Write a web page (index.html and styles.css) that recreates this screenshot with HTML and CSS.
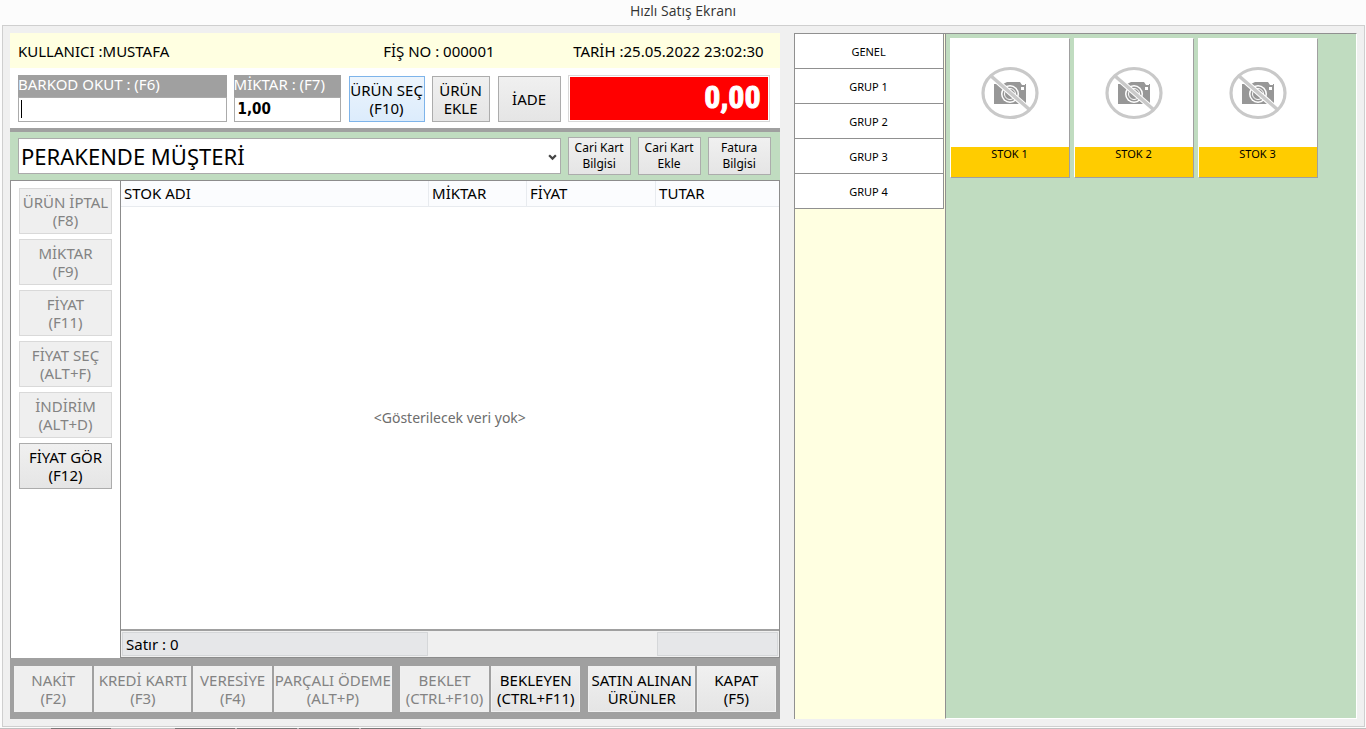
FILE: index.html
```html
<!DOCTYPE html>
<html lang="tr">
<head>
<meta charset="utf-8">
<title>Hızlı Satış Ekranı</title>
<link rel="stylesheet" href="styles.css">
</head>
<body>
<svg class="defs" aria-hidden="true">
  <symbol id="no-photo" viewBox="0 0 58 54">
    <path fill="#979797" d="M13 18h3v-1h4v1h2l4-2h13l2 3h4v-1h-1v1h1v19H13z"/>
    <path fill="#fff" d="M40 21h3v3h-3z"/>
    <circle cx="29" cy="28" r="9" fill="#fff"/>
    <circle cx="29" cy="28" r="7.500" fill="#979797"/>
    <circle cx="29" cy="28" r="5.500" fill="#979797" stroke="#fff" stroke-width="1"/>
    <path d="M10 10l39 34" stroke="#fff" stroke-width="5.500"/>
    <path d="M10 10l39 34" stroke="#c9c9c9" stroke-width="3.500"/>
    <ellipse cx="29" cy="27" rx="27" ry="24.500" fill="none" stroke="#c9c9c9" stroke-width="3.200"/>
  </symbol>
</svg>
<header class="titlebar">Hızlı Satış Ekranı</header>
<main class="window">
  <section class="sale">
    <div class="info">
      <span class="info-user">KULLANICI :MUSTAFA</span>
      <span class="info-slip">FİŞ NO : 000001</span>
      <span class="info-date">TARİH :25.05.2022 23:02:30</span>
    </div>
    <div class="entry">
      <div class="field field-barcode">
        <label for="barcode">BARKOD OKUT : (F6)</label>
        <input id="barcode" type="text">
        <span class="caret"></span>
      </div>
      <div class="field field-qty">
        <label for="qty">MİKTAR : (F7)</label>
        <input id="qty" type="text" value="1,00">
      </div>
      <button class="btn btn-active pick">ÜRÜN SEÇ<br>(F10)</button>
      <button class="btn add">ÜRÜN<br>EKLE</button>
      <button class="btn refund">İADE</button>
      <output class="total">0,00</output>
    </div>
    <div class="customer">
      <div class="combo">
        <select aria-label="Müşteri"><option>PERAKENDE MÜŞTERİ</option></select>
        <svg class="chevron" viewBox="0 0 8 6"><path d="M1 1l3 3 3-3" fill="none" stroke="#444" stroke-width="2"/></svg>
      </div>
      <button class="btn btn-small">Cari Kart<br>Bilgisi</button>
      <button class="btn btn-small">Cari Kart<br>Ekle</button>
      <button class="btn btn-small">Fatura<br>Bilgisi</button>
    </div>
    <div class="body">
      <nav class="side">
        <button class="btn" disabled>ÜRÜN İPTAL<br>(F8)</button>
        <button class="btn" disabled>MİKTAR<br>(F9)</button>
        <button class="btn" disabled>FİYAT<br>(F11)</button>
        <button class="btn" disabled>FİYAT SEÇ<br>(ALT+F)</button>
        <button class="btn" disabled>İNDİRİM<br>(ALT+D)</button>
        <button class="btn">FİYAT GÖR<br>(F12)</button>
      </nav>
      <div class="lines">
        <table>
          <colgroup><col><col class="col-qty"><col class="col-price"><col class="col-sum"></colgroup>
          <thead><tr><th>STOK ADI</th><th>MİKTAR</th><th>FİYAT</th><th>TUTAR</th></tr></thead>
        </table>
        <p class="empty">&lt;Gösterilecek veri yok&gt;</p>
        <div class="summary">
          <span class="cell cell-rows">Satır : 0</span>
          <span class="cell cell-sum"></span>
        </div>
      </div>
    </div>
    <footer class="actions">
      <button class="btn cash" disabled>NAKİT<br>(F2)</button>
      <button class="btn card-pay" disabled>KREDİ KARTI<br>(F3)</button>
      <button class="btn cash" disabled>VERESİYE<br>(F4)</button>
      <button class="btn split" disabled>PARÇALI ÖDEME<br>(ALT+P)</button>
      <button class="btn hold group-start" disabled>BEKLET<br>(CTRL+F10)</button>
      <button class="btn hold">BEKLEYEN<br>(CTRL+F11)</button>
      <button class="btn bought group-start">SATIN ALINAN<br>ÜRÜNLER</button>
      <button class="btn cash">KAPAT<br>(F5)</button>
    </footer>
  </section>
  <section class="catalog">
    <nav class="groups">
      <button>GENEL</button>
      <button>GRUP 1</button>
      <button>GRUP 2</button>
      <button>GRUP 3</button>
      <button>GRUP 4</button>
    </nav>
    <div class="products">
      <button class="product"><span class="photo"><svg><use href="#no-photo"/></svg></span><span class="name">STOK 1</span></button>
      <button class="product"><span class="photo"><svg><use href="#no-photo"/></svg></span><span class="name">STOK 2</span></button>
      <button class="product"><span class="photo"><svg><use href="#no-photo"/></svg></span><span class="name">STOK 3</span></button>
    </div>
  </section>
</main>
<div class="taskbar"><i></i><i></i><i></i><i></i><i></i></div>
</body>
</html>
```
FILE: styles.css
```css
* { box-sizing: border-box; }
body {
  margin: 0;
  min-height: 100vh;
  display: flex;
  flex-direction: column;
  background: #fcfcfc;
  color: #000;
  font: 15px/18px Tahoma, "Noto Sans", sans-serif;
}
button, input, select { font: inherit; color: inherit; margin: 0; border-radius: 0; }
.defs { position: absolute; width: 0; height: 0; }
.titlebar {
  height: 25px;
  line-height: 22px;
  text-align: center;
  color: #333;
  font-family: "Open Sans", sans-serif;
  font-size: 14px;
}
.window {
  flex: 1;
  display: flex;
  gap: 14px;
  margin: 0 1px 1px 2px;
  padding: 7px;
  border: 1px solid #cfcfcf;
  background: #f0f0f0;
}
.sale { flex: 769 1 0; min-width: 0; display: flex; flex-direction: column; }
.info {
  display: flex;
  align-items: center;
  height: 35px;
  padding: 0 16px 0 8px;
  background: #ffffe1;
}
.info-user { flex: 1; }
.info-slip { flex: 0 0 190px; }
.entry {
  display: flex;
  gap: 7px;
  height: 64px;
  padding: 7px 10px 6px 8px;
  background: #fff;
  border-bottom: 4px solid #a0a0a0;
}
.field { position: relative; display: flex; flex-direction: column; height: 47px; }
.field label {
  height: 22px;
  line-height: 18px;
  background: #a0a0a0;
  color: #fff;
}
.field input {
  width: 100%;
  height: 25px;
  padding: 0 3px 2px;
  border: 1px solid #ababab;
  background: #fff;
  font-family: Tahoma, "DejaVu Sans Condensed", "DejaVu Sans", sans-serif;
  font-weight: bold;
}
.caret { position: absolute; left: 3px; top: 25px; width: 1px; height: 18px; background: #000; }
.field-barcode { flex: 1; }
.field-qty { flex: 0 0 107px; }
.btn {
  height: 46px;
  padding: 0;
  border: 1px solid #acacac;
  background: linear-gradient(#f0f0f0, #e5e5e5);
  text-align: center;
  white-space: nowrap;
}
.btn:disabled { border-color: #d9d9d9; background: #efefef; color: #838383; }
.btn-active { border-color: #7eb4ea; background: linear-gradient(#ecf4fc, #dcecfc); }
.entry .btn { margin-top: 1px; }
.pick { flex: 0 0 76px; margin-left: 1px; }
.add { flex: 0 0 58px; }
.refund { flex: 0 0 63px; margin-left: 1px; }
.total {
  flex: 0 0 202px;
  height: 47px;
  padding-right: 8px;
  border: 1px solid #d9d9d9;
  background: #f00;
  box-shadow: inset 0 0 0 1px #fff;
  color: #fff;
  font: bold 32px/43px Impact, "Roboto Condensed", "Open Sans Condensed", "Liberation Sans Narrow", "Liberation Sans", sans-serif;
  -webkit-text-stroke: 1px #fff;
  text-align: right;
}
.customer {
  display: flex;
  gap: 7px;
  height: 48px;
  padding: 5px 9px 5px 8px;
  background: #c0dcc0;
}
.combo { position: relative; flex: 1; height: 36px; margin-top: 1px; }
.combo select {
  width: 100%;
  height: 100%;
  padding: 0 2px;
  border: 1px solid #ababab;
  background: #fff;
  appearance: none;
  font-size: 22px;
  line-height: 32px;
}
.chevron { position: absolute; right: 4px; top: 16px; width: 9px; height: 7px; }
.btn-small { flex: 0 0 63px; height: 38px; font-size: 12px; line-height: 16px; }
.body { flex: 1; display: flex; }
.side {
  flex: 0 0 110px;
  display: flex;
  flex-direction: column;
  gap: 5px;
  padding: 7px 8px;
  border: solid #909090;
  border-width: 1px 0 0 1px;
  background: #fff;
}
.lines {
  flex: 1;
  display: flex;
  flex-direction: column;
  border: 1px solid #8c8c8c;
  background: #fff;
}
.lines table { width: 100%; table-layout: fixed; border-collapse: collapse; background: #fbfcfe; }
.lines th {
  height: 25px;
  padding: 0 3px;
  border-bottom: 1px solid #e8ebef;
  border-right: 1px solid #e8ebef;
  font-weight: normal;
  text-align: left;
}
.lines th:last-child { border-right: 0; }
.col-qty { width: 98px; }
.col-price { width: 129px; }
.col-sum { width: 123px; }
.empty {
  flex: 1;
  display: flex;
  align-items: center;
  justify-content: center;
  margin: 0;
  color: #6d6d6d;
  font-size: 14px;
}
.summary {
  display: flex;
  justify-content: space-between;
  height: 28px;
  padding: 1px;
  border-top: 2px solid #a0a0a0;
  background: #f0f0f0;
}
.cell { border: 1px solid #d5d7d9; background: #e6e7e9; line-height: 23px; }
.cell-rows { flex: 0 0 306px; padding-left: 3px; }
.cell-sum { flex: 0 0 121px; }
.actions { display: flex; gap: 2px; height: 61px; padding: 8px 4px; background: #a0a0a0; }
.actions .btn { flex: 78 1 0; border-color: #f0f0f0; }
.actions .card-pay { flex-grow: 97; }
.actions .split { flex-grow: 118; }
.actions .hold { flex-grow: 89; }
.actions .bought { flex-grow: 107; }
.actions .group-start { margin-left: 6px; }
.catalog { flex: 563 1 0; min-width: 0; display: flex; }
.groups {
  flex: 0 0 151px;
  display: flex;
  flex-direction: column;
  padding-right: 1px;
  border: solid #909090;
  border-width: 1px 0 0 1px;
  background: #ffffe1;
}
.groups button {
  height: 35px;
  padding: 2px 0 0;
  border: solid #909090;
  border-width: 0 1px 1px 0;
  background: #fff;
  font-size: 11px;
}
.products {
  flex: 1;
  display: flex;
  flex-wrap: wrap;
  align-content: flex-start;
  gap: 4px;
  padding: 4px;
  border: 1px solid;
  border-color: #909090 #fff #fff #909090;
  background: #c0dcc0;
}
.product {
  width: 120px;
  height: 140px;
  padding: 0;
  display: flex;
  flex-direction: column;
  border: 1px solid;
  border-color: #fff #a0a0a0 #a0a0a0 #fff;
  background: #fff;
  font-size: 11px;
}
.photo { flex: 1; width: 100%; display: flex; align-items: center; justify-content: center; }
.photo svg { width: 58px; height: 54px; }
.name { width: 100%; height: 30px; line-height: 14px; background: #fc0; }
.taskbar { height: 1px; display: flex; gap: 2px; padding-left: 51px; background: #c0c0c0; }
.taskbar i { width: 60px; background: #777; }
.taskbar i:first-child { margin-right: 62px; }
```
